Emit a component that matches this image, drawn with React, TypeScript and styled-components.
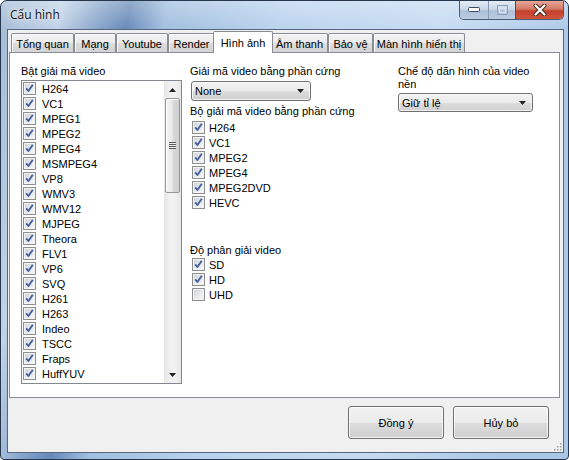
import styled, { createGlobalStyle } from "styled-components";

const GlobalStyle = createGlobalStyle`
  html, body {
    margin: 0;
    padding: 0;
    background: #fff;
  }
  body {
    width: 569px;
    height: 460px;
    overflow: hidden;
    font-family: "Liberation Sans", Arial, sans-serif;
    font-size: 11px;
    color: #000;
  }
`;

const tabs = [
  { label: "Tổng quan", w: 63 },
  { label: "Mạng", w: 42 },
  { label: "Youtube", w: 52 },
  { label: "Render", w: 47 },
  { label: "Hình ảnh", w: 60, active: true },
  { label: "Âm thanh", w: 57 },
  { label: "Bảo vệ", w: 45 },
  { label: "Màn hình hiển thị", w: 92 },
];

const codecs = [
  "H264", "VC1", "MPEG1", "MPEG2", "MPEG4", "MSMPEG4", "VP8", "WMV3", "WMV12",
  "MJPEG", "Theora", "FLV1", "VP6", "SVQ", "H261", "H263", "Indeo", "TSCC",
  "Fraps", "HuffYUV",
];

const hwCodecs = ["H264", "VC1", "MPEG2", "MPEG4", "MPEG2DVD", "HEVC"];

const resolutions = [
  { label: "SD", checked: true },
  { label: "HD", checked: true },
  { label: "UHD", checked: false },
];

const CheckBox = ({ checked }: { checked: boolean }) => (
  <Box>
    {checked && (
      <svg width="11" height="11" viewBox="0 0 11 11">
        <path
          d="M2.2 5.4 L4.4 8 L8.8 1.8"
          fill="none"
          stroke="#4460a3"
          strokeWidth="1.9"
          strokeLinejoin="round"
        />
      </svg>
    )}
  </Box>
);

const Arrow = ({ up }: { up?: boolean }) => (
  <svg width="7" height="4" viewBox="0 0 7 4">
    <path d={up ? "M0 4 L3.5 0 L7 4 Z" : "M0 0 L7 0 L3.5 4 Z"} fill="#222" />
  </svg>
);

const App = () => {
  return (
    <>
      <GlobalStyle />
      <Window>
        <TitleBar>
          <Title>Cấu hình</Title>
          <Controls>
            <CaptionButton $w={28}>
              <svg width="12" height="6" viewBox="0 0 12 6">
                <rect x="0.5" y="0.5" width="11" height="4" rx="1" fill="#fff" stroke="#3a4a62" />
              </svg>
            </CaptionButton>
            <CaptionButton $w={27}>
              <svg width="11" height="10" viewBox="0 0 11 10">
                <rect x="0.5" y="0.5" width="10" height="9" fill="none" stroke="#8ea3bd" />
                <rect x="2.5" y="3" width="6" height="4.5" fill="none" stroke="#dfe8f3" />
              </svg>
            </CaptionButton>
            <CaptionButton $w={48} $close>
              <svg width="14" height="12" viewBox="0 0 14 12">
                <path
                  d="M2.5 1.5 L11.5 10.5 M11.5 1.5 L2.5 10.5"
                  stroke="#3b2420"
                  strokeWidth="4"
                  strokeLinecap="round"
                />
                <path
                  d="M2.5 1.5 L11.5 10.5 M11.5 1.5 L2.5 10.5"
                  stroke="#fff"
                  strokeWidth="2.2"
                  strokeLinecap="round"
                />
              </svg>
            </CaptionButton>
          </Controls>
        </TitleBar>

        <ClientFrame>
          <TabStrip>
            {tabs.map((t) => (
              <Tab key={t.label} $w={t.w} $active={t.active}>
                {t.label}
              </Tab>
            ))}
          </TabStrip>

          <Panel>
            <LeftColumn>
              <Label>Bật giải mã video</Label>
              <ListBox>
                <ListItems>
                  {codecs.map((c) => (
                    <ListRow key={c}>
                      <CheckBox checked />
                      <span>{c}</span>
                    </ListRow>
                  ))}
                </ListItems>
                <ScrollBar>
                  <ScrollArrow>
                    <Arrow up />
                  </ScrollArrow>
                  <Thumb>
                    <Grip />
                  </Thumb>
                  <Track />
                  <ScrollArrow>
                    <Arrow />
                  </ScrollArrow>
                </ScrollBar>
              </ListBox>
            </LeftColumn>

            <MiddleColumn>
              <Label>Giải mã video bằng phần cứng</Label>
              <Select $w={120} $h={20}>
                <span>None</span>
                <Arrow />
              </Select>
              <Label $top={4}>Bộ giải mã video bằng phần cứng</Label>
              <CheckGroup>
                {hwCodecs.map((c) => (
                  <CheckRow key={c}>
                    <CheckBox checked />
                    <span>{c}</span>
                  </CheckRow>
                ))}
              </CheckGroup>
              <Label $top={34}>Độ phân giải video</Label>
              <CheckGroup $top={0}>
                {resolutions.map((r) => (
                  <CheckRow key={r.label}>
                    <CheckBox checked={r.checked} />
                    <span>{r.label}</span>
                  </CheckRow>
                ))}
              </CheckGroup>
            </MiddleColumn>

            <RightColumn>
              <Label>Chế độ dãn hình của video nền</Label>
              <Select $w={135} $h={19} $top={2} $left={0}>
                <span>Giữ tỉ lệ</span>
                <Arrow />
              </Select>
            </RightColumn>
          </Panel>

          <Footer>
            <Button>Đồng ý</Button>
            <Button>Hủy bỏ</Button>
            <ResizeGrip>
              <svg width="9" height="9" viewBox="0 0 9 9">
                {[
                  [7, 1], [4, 4], [7, 4], [1, 7], [4, 7], [7, 7],
                ].map(([x, y]) => (
                  <rect key={`${x}-${y}`} x={x} y={y} width="1.5" height="1.5" fill="#a0a0a0" />
                ))}
              </svg>
            </ResizeGrip>
          </Footer>
        </ClientFrame>
      </Window>
    </>
  );
};

export default App;

//STYLED

const Window = styled.div`
  box-sizing: border-box;
  width: 569px;
  height: 460px;
  border: 1px solid #26364c;
  border-radius: 7px 7px 4px 4px;
  overflow: hidden;
  background:
    linear-gradient(180deg, rgba(255, 255, 255, 0.3) 0px, rgba(255, 255, 255, 0) 30px),
    linear-gradient(
      100deg,
      #a3bad6 0px,
      #c1d3e8 60px,
      #86a4ca 100px,
      #6689b7 128px,
      #a0bedf 165px,
      #bad3ee 280px,
      #c6dbf2 440px,
      #abc7e6 569px
    );
  display: flex;
  flex-direction: column;
`;

const TitleBar = styled.div`
  height: 28px;
  display: flex;
  justify-content: space-between;
  align-items: flex-start;
`;

const Title = styled.div`
  font-family: "Open Sans", "Noto Sans", sans-serif;
  font-size: 12px;
  line-height: 16px;
  padding: 6px 0 0 9px;
  color: #111;
  text-shadow: 0 0 6px rgba(255, 255, 255, 0.9), 0 0 2px rgba(255, 255, 255, 0.8);
`;

const Controls = styled.div`
  display: flex;
  height: 19px;
  margin-right: 4px;
  box-sizing: border-box;
  border: 1px solid #4b5b73;
  border-top: none;
  border-radius: 0 0 5px 5px;
  overflow: hidden;
`;

const CaptionButton = styled.div<{ $w: number; $close?: boolean }>`
  width: ${(p) => p.$w}px;
  height: 100%;
  display: flex;
  align-items: center;
  justify-content: center;
  box-sizing: border-box;
  border-left: ${(p) => (p.$close ? "1px solid #7b3b33" : "1px solid #8a9bb1")};
  background: ${(p) =>
    p.$close
      ? "linear-gradient(180deg, #e9a797 0%, #d47966 45%, #c2412b 55%, #d0543f 100%)"
      : "linear-gradient(180deg, #e3ebf5 0%, #cbd8e8 45%, #adc0d8 55%, #bccde2 100%)"};

  &:first-child {
    border-left: none;
  }
`;

const ClientFrame = styled.div`
  margin: 0 4px 0 6px;
  height: 424px;
  box-sizing: border-box;
  border: 1px solid #56677f;
  background: #f0f0f0;
  display: flex;
  flex-direction: column;
`;

const TabStrip = styled.div`
  display: flex;
  align-items: flex-end;
  height: 22px;
  padding-left: 3px;
  position: relative;
  z-index: 1;
`;

const Tab = styled.div<{ $w: number; $active?: boolean }>`
  width: ${(p) => p.$w}px;
  height: ${(p) => (p.$active ? 22 : 19)}px;
  margin: ${(p) => (p.$active ? "0 -2px -1px" : "0")};
  box-sizing: border-box;
  border: 1px solid #898c95;
  border-bottom: none;
  border-radius: 2px 2px 0 0;
  display: flex;
  align-items: center;
  justify-content: center;
  padding-top: ${(p) => (p.$active ? 0 : 1)}px;
  white-space: nowrap;
  position: relative;
  z-index: ${(p) => (p.$active ? 2 : 1)};
  background: ${(p) =>
    p.$active
      ? "#fff"
      : "linear-gradient(180deg, #f3f3f3 0%, #ebebeb 50%, #dddddd 51%, #d3d3d3 100%)"};
  box-shadow: ${(p) => (p.$active ? "none" : "inset 1px 1px 0 #fbfbfb")};
`;

const Panel = styled.div`
  margin: 0 3px 0 1px;
  height: 346px;
  box-sizing: border-box;
  border: 1px solid #898c95;
  background: #fff;
  display: flex;
  align-items: flex-start;
  gap: 8px;
  padding: 12px 0 0 11px;
`;

const LeftColumn = styled.div`
  width: 161px;
  display: flex;
  flex-direction: column;
`;

const MiddleColumn = styled.div`
  width: 200px;
  display: flex;
  flex-direction: column;
`;

const RightColumn = styled.div`
  width: 135px;
  display: flex;
  flex-direction: column;
`;

const Label = styled.div<{ $top?: number }>`
  line-height: 13px;
  margin-top: ${(p) => p.$top ?? 0}px;
  white-space: normal;
`;

const ListBox = styled.div`
  margin-top: 2px;
  height: 304px;
  box-sizing: border-box;
  border: 1px solid #828790;
  display: flex;
`;

const ListItems = styled.div`
  flex: 1;
  overflow: hidden;
`;

const ListRow = styled.div`
  height: 15px;
  display: flex;
  align-items: center;
  gap: 6px;
  padding-left: 1px;
  white-space: nowrap;
`;

const ScrollBar = styled.div`
  width: 17px;
  display: flex;
  flex-direction: column;
  background: linear-gradient(90deg, #e6e6e6 0%, #f2f2f2 40%, #f2f2f2 60%, #e6e6e6 100%);
`;

const ScrollArrow = styled.div`
  height: 17px;
  display: flex;
  align-items: center;
  justify-content: center;
`;

const Thumb = styled.div`
  height: 95px;
  margin: 0 1px;
  box-sizing: border-box;
  border: 1px solid #979797;
  border-radius: 2px;
  background: linear-gradient(90deg, #f4f4f4 0%, #eaeaea 45%, #d9d9d9 55%, #cfcfcf 100%);
  box-shadow: inset 1px 1px 0 #fff;
  display: flex;
  align-items: center;
  justify-content: center;
`;

const Grip = styled.div`
  width: 7px;
  height: 7px;
  background: repeating-linear-gradient(180deg, #5d5d5d 0px, #5d5d5d 1px, #e8e8e8 1px, #e8e8e8 2px);
`;

const Track = styled.div`
  flex: 1;
`;

const Select = styled.div<{ $w: number; $h: number; $top?: number; $left?: number }>`
  width: ${(p) => p.$w}px;
  height: ${(p) => p.$h}px;
  margin-top: ${(p) => p.$top ?? 3}px;
  margin-left: ${(p) => p.$left ?? 1}px;
  box-sizing: border-box;
  border: 1px solid #707070;
  border-radius: 3px;
  background: linear-gradient(180deg, #f2f2f2 0%, #ebebeb 50%, #dddddd 51%, #cfcfcf 100%);
  box-shadow: inset 0 0 0 1px rgba(255, 255, 255, 0.7);
  display: flex;
  align-items: center;
  justify-content: space-between;
  padding: 0 6px 0 3px;
`;

const CheckGroup = styled.div<{ $top?: number }>`
  display: flex;
  flex-direction: column;
  margin-top: ${(p) => p.$top ?? 2}px;
`;

const CheckRow = styled.div`
  height: 15px;
  display: flex;
  align-items: center;
  gap: 4px;
  padding-left: 2px;
`;

const Box = styled.span`
  width: 13px;
  height: 13px;
  flex: none;
  box-sizing: border-box;
  border: 1px solid #8e8f8f;
  background: linear-gradient(135deg, #cdd0d5 0%, #e7e8ea 50%, #f8f8f8 100%);
  box-shadow: inset 0 0 0 1px #f3f3f3;
  display: flex;
  align-items: center;
  justify-content: center;
`;

const Footer = styled.div`
  flex: 1;
  display: flex;
  justify-content: flex-end;
  align-items: flex-start;
  gap: 9px;
  padding: 8px 14px 0 0;
  position: relative;
`;

const Button = styled.div`
  width: 96px;
  height: 33px;
  box-sizing: border-box;
  border: 1px solid #707070;
  border-radius: 3px;
  background: linear-gradient(180deg, #f2f2f2 0%, #ebebeb 50%, #dddddd 51%, #cfcfcf 100%);
  box-shadow: inset 0 0 0 1px rgba(255, 255, 255, 0.75);
  display: flex;
  align-items: center;
  justify-content: center;
`;

const ResizeGrip = styled.div`
  position: absolute;
  right: 1px;
  bottom: 1px;
  display: flex;
`;
